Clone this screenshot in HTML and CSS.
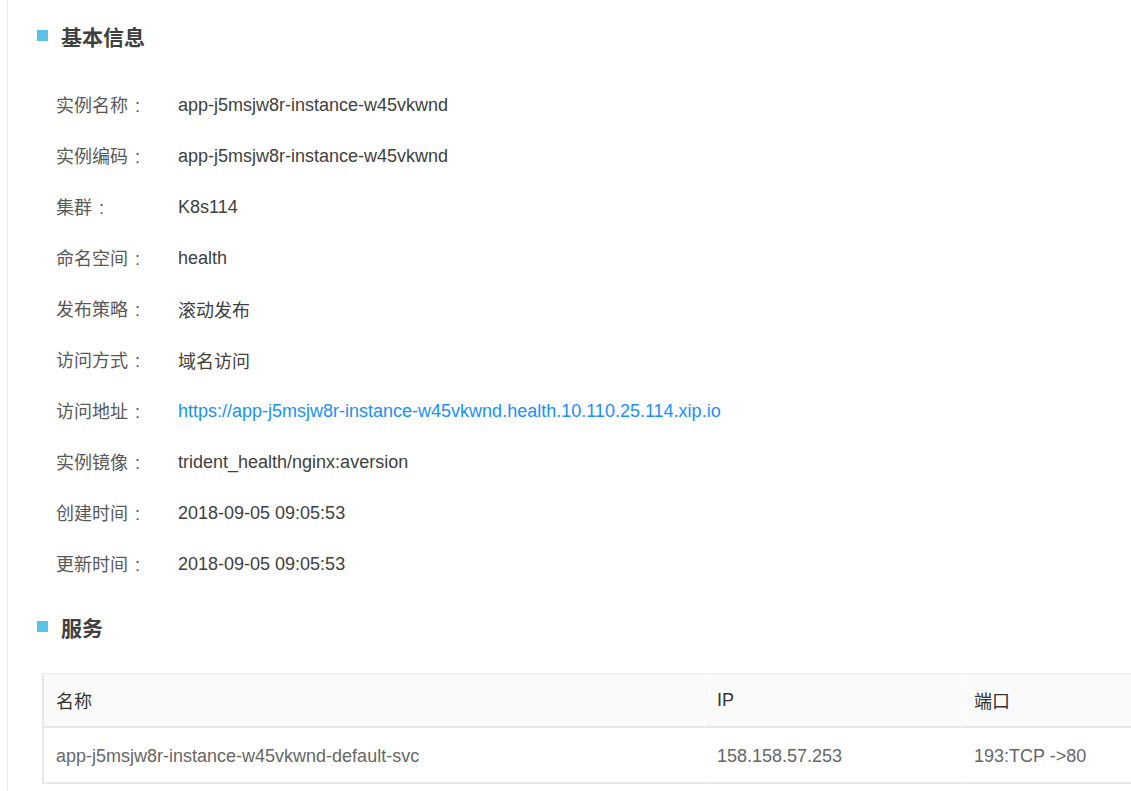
FILE: index.html
```html
<!DOCTYPE html>
<html lang="zh">
<head>
<meta charset="utf-8">
<link rel="stylesheet" href="styles.css">
</head>
<body>
<div class="page">
  <section class="section">
    <h2 class="section-title"><span class="marker"></span>基本信息</h2>
    <div class="info-list">
      <div class="info-row"><span class="label">实例名称<span class="colon">:</span></span><span class="value">app-j5msjw8r-instance-w45vkwnd</span></div>
      <div class="info-row"><span class="label">实例编码<span class="colon">:</span></span><span class="value">app-j5msjw8r-instance-w45vkwnd</span></div>
      <div class="info-row"><span class="label">集群<span class="colon">:</span></span><span class="value">K8s114</span></div>
      <div class="info-row"><span class="label">命名空间<span class="colon">:</span></span><span class="value">health</span></div>
      <div class="info-row"><span class="label">发布策略<span class="colon">:</span></span><span class="value">滚动发布</span></div>
      <div class="info-row"><span class="label">访问方式<span class="colon">:</span></span><span class="value">域名访问</span></div>
      <div class="info-row"><span class="label">访问地址<span class="colon">:</span></span><a class="value link" href="#">https://app-j5msjw8r-instance-w45vkwnd.health.10.110.25.114.xip.io</a></div>
      <div class="info-row"><span class="label">实例镜像<span class="colon">:</span></span><span class="value">trident_health/nginx:aversion</span></div>
      <div class="info-row"><span class="label">创建时间<span class="colon">:</span></span><span class="value">2018-09-05 09:05:53</span></div>
      <div class="info-row"><span class="label">更新时间<span class="colon">:</span></span><span class="value">2018-09-05 09:05:53</span></div>
    </div>
  </section>
  <section class="section">
    <h2 class="section-title"><span class="marker"></span>服务</h2>
    <div class="table-wrap">
      <table class="svc-table">
        <thead>
          <tr><th class="col-name">名称</th><th class="col-ip">IP</th><th class="col-port">端口</th></tr>
        </thead>
        <tbody>
          <tr><td>app-j5msjw8r-instance-w45vkwnd-default-svc</td><td>158.158.57.253</td><td>193:TCP -&gt;80</td></tr>
        </tbody>
      </table>
    </div>
  </section>
</div>
</body>
</html>
```
FILE: styles.css
```css
html, body {
  margin: 0;
  padding: 0;
  background: #fff;
  overflow: hidden;
}
body {
  font-family: "Liberation Sans", "Noto Sans CJK SC", Arial, sans-serif;
  font-size: 18px;
  color: #333;
}
.page {
  margin-left: 7px;
  border-left: 1px solid #ececec;
  min-height: 791px;
  padding-top: 22px;
}
.section-title {
  display: flex;
  align-items: center;
  margin: 0;
  padding-left: 29px;
  height: 28px;
  font-size: 21px;
  font-weight: bold;
  color: #404040;
  font-family: "Liberation Sans", "Noto Sans CJK SC", sans-serif;
}
.marker {
  width: 11px;
  height: 11px;
  background: #5bc2e7;
  margin-right: 13px;
  margin-top: -1px;
}
.info-list {
  display: flex;
  flex-direction: column;
  padding-top: 28px;
  padding-left: 48px;
  padding-bottom: 25px;
}
.info-row {
  display: flex;
  align-items: center;
  height: 51px;
}
.label {
  width: 122px;
  flex: none;
  color: #595959;
}
.colon {
  margin-left: 7px;
}
.value {
  color: #404040;
  padding-top: 3px;
}
.link {
  color: #1890ff;
  text-decoration: none;
}
.table-wrap {
  margin-top: 32px;
  margin-left: 34px;
  overflow: hidden;
}
.svc-table {
  width: 1200px;
  border-collapse: separate;
  border-spacing: 0;
  border-left: 2px solid #e8e8e8;
  border-top: 1px solid #ececec;
  table-layout: fixed;
}
.svc-table th,
.svc-table td {
  text-align: left;
  padding: 0 12px 0 12px;
  border-bottom: 2px solid #e8e8e8;
  border-right: 1px solid #fff;
  font-weight: normal;
}
.svc-table th {
  height: 52px;
  background: #fafafa;
  color: #333;
}
.svc-table td {
  height: 52px;
  padding-top: 2px;
  color: #666;
}
.col-name { width: 636px; }
.col-ip { width: 232px; }
.col-port { width: 300px; }
```
